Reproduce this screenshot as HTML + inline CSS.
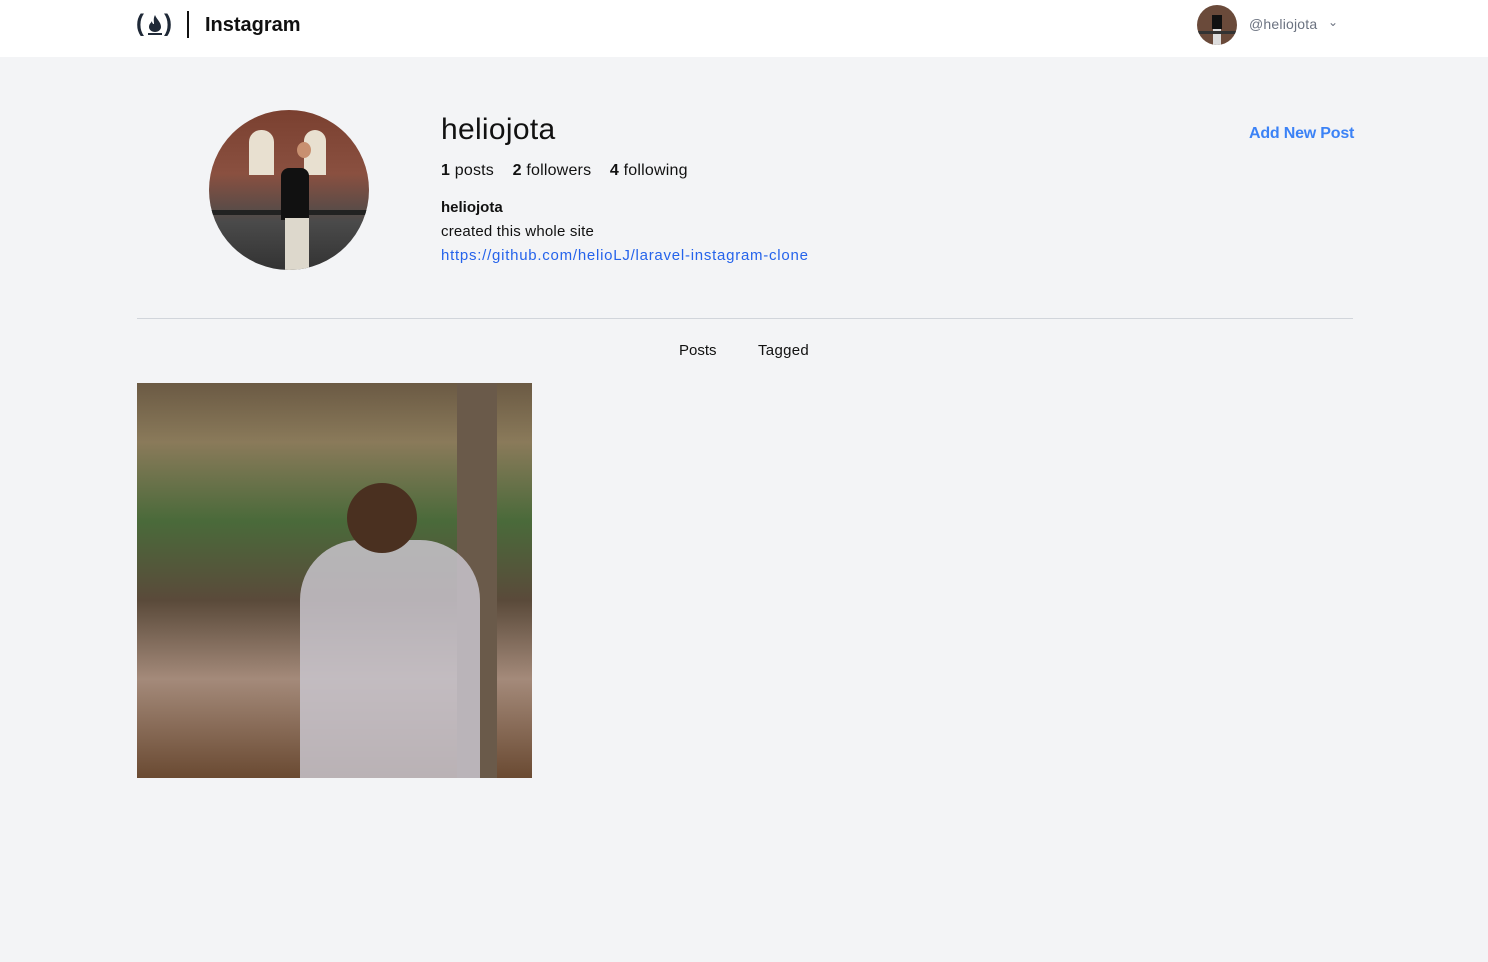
<!DOCTYPE html>
<html><head><meta charset="utf-8"><style>
body{margin:0;background:#f3f4f6;font-family:"Liberation Sans",sans-serif;color:#111;}
.nav{position:absolute;top:0;left:0;width:1488px;height:57px;background:#fff;}
.t{position:absolute;white-space:nowrap}
</style></head><body>
<div class="nav">
 <div class="t" style="left:136px;top:10px;font-size:24px;color:#1f2937;font-weight:bold">(</div>
 <svg class="t" style="left:145px;top:13px" width="20" height="24" viewBox="0 0 20 24"><path d="M10 2C12 7 16 9 16 14c0 3-3 5-6 5s-6-2-6-5c0-3 2-4 3-6 0 2 1 3 2 3 0-3-1-5 1-9z" fill="#1f2937"/><path d="M3 21h14" stroke="#1f2937" stroke-width="2"/></svg>
 <div class="t" style="left:164px;top:10px;font-size:24px;color:#1f2937;font-weight:bold">)</div>
 <div class="t" style="left:187px;top:11px;width:2px;height:27px;background:#111"></div>
 <div class="t" style="left:205px;top:14px;font-size:20px;font-weight:bold">Instagram</div>
 <div class="t" style="left:1197px;top:5px;width:40px;height:40px;border-radius:50%;overflow:hidden;background:#6a4a3a"><div style="position:absolute;left:15px;top:10px;width:10px;height:14px;background:#111"></div><div style="position:absolute;left:16px;top:24px;width:8px;height:16px;background:#ddd"></div><div style="position:absolute;left:0;top:26px;width:40px;height:3px;background:#333"></div></div>
 <div class="t" style="left:1249px;top:16px;font-size:14px;color:#6b7280;letter-spacing:.2px">@heliojota</div>
 <div class="t" style="left:1328px;top:15px;font-size:12px;color:#6b7280">⌄</div>
</div>
<div class="t" style="left:209px;top:110px;width:160px;height:160px;border-radius:50%;overflow:hidden;background:linear-gradient(180deg,#7a4030 0%,#8a5040 40%,#4a4a4a 70%,#333 100%)">
 <div style="position:absolute;left:40px;top:20px;width:25px;height:45px;background:#e8e0d0;border-radius:12px 12px 0 0"></div>
 <div style="position:absolute;left:95px;top:20px;width:22px;height:45px;background:#e8e0d0;border-radius:11px 11px 0 0"></div>
 <div style="position:absolute;left:0;top:100px;width:160px;height:5px;background:#222"></div>
 <div style="position:absolute;left:72px;top:58px;width:28px;height:52px;background:#111;border-radius:8px 8px 0 0"></div>
 <div style="position:absolute;left:88px;top:32px;width:14px;height:16px;background:#c89070;border-radius:50%"></div>
 <div style="position:absolute;left:76px;top:108px;width:24px;height:52px;background:#ddd8cc"></div>
</div>
<div class="t" style="left:441px;top:113px;font-size:30px;letter-spacing:.3px">heliojota</div>
<div class="t" style="left:1249px;top:125px;font-size:16px;color:#3b82f6;font-weight:bold;letter-spacing:-.2px">Add New Post</div>
<div class="t" style="left:441px;top:162px;font-size:16px;letter-spacing:.2px"><b>1</b> posts &nbsp;&nbsp; <b>2</b> followers &nbsp;&nbsp; <b>4</b> following</div>
<div class="t" style="left:441px;top:199px;font-size:15px;font-weight:bold">heliojota</div>
<div class="t" style="left:441px;top:223px;font-size:15px;letter-spacing:.2px">created this whole site</div>
<div class="t" style="left:441px;top:247px;font-size:15px;color:#2563eb;letter-spacing:.75px">https://github.com/helioLJ/laravel-instagram-clone</div>
<div class="t" style="left:137px;top:318px;width:1216px;height:1px;background:#d1d5db"></div>
<div class="t" style="left:679px;top:342px;font-size:15px">Posts</div>
<div class="t" style="left:758px;top:342px;font-size:15px;letter-spacing:.3px">Tagged</div>
<div class="t" style="left:137px;top:383px;width:395px;height:395px;overflow:hidden;background:linear-gradient(180deg,#6b5a44 0%,#8a7a5a 15%,#4a6a3a 35%,#5a4a3a 55%,#a48a7a 75%,#6a4a32 100%)">
 <div style="position:absolute;left:320px;top:0;width:40px;height:395px;background:#6a5a4a"></div>
 <div style="position:absolute;left:163px;top:157px;width:180px;height:238px;background:#c8c4cc;border-radius:60px 60px 0 0;opacity:.85"></div>
 <div style="position:absolute;left:210px;top:100px;width:70px;height:70px;background:#4a3020;border-radius:50%"></div>
</div>
</body></html>
